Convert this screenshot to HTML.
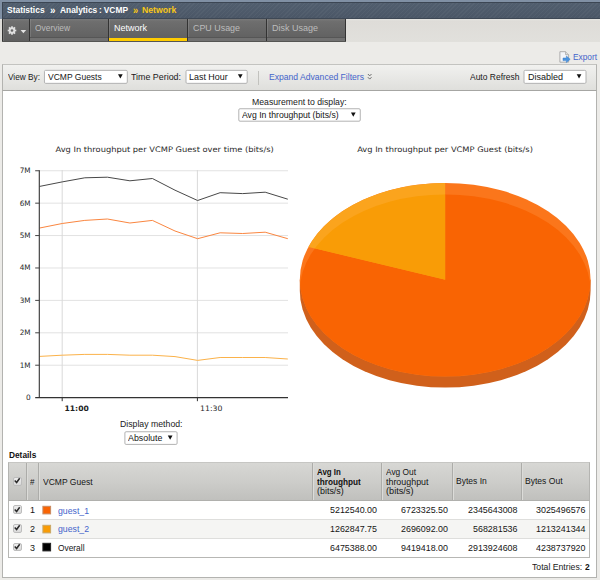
<!DOCTYPE html>
<html><head><meta charset="utf-8"><title>Statistics : Analytics : VCMP : Network</title>
<style>
html,body{margin:0;padding:0;}
body{width:600px;height:580px;overflow:hidden;background:#ecebe8;font-family:"Liberation Sans",Arial,sans-serif;font-size:9px;color:#1a1a1a;position:relative;}
.abs{position:absolute;}
a{text-decoration:none;cursor:pointer;}
.tx{position:absolute;white-space:nowrap;line-height:12px;height:12px;transform-origin:0 0;display:block;}
#hdrl{left:0;top:0;width:600px;height:19px;background:#8090a4;}
#hdr{left:2px;top:2px;width:598px;height:17px;background:repeating-linear-gradient(135deg,rgba(255,255,255,.035) 0,rgba(255,255,255,.035) 1px,rgba(0,0,0,0) 1px,rgba(0,0,0,0) 3px),linear-gradient(#515e6e,#4b5767);border-top:1px solid #3c4653;border-left:1px solid #3c4653;border-bottom:1px solid #3e4855;box-sizing:border-box;}
#tabs{left:2px;top:19px;width:343.8px;height:23px;background:linear-gradient(#333 22px,#555553 22px);box-sizing:border-box;}
.tab{position:absolute;top:0;height:22px;box-sizing:border-box;border-left:1px solid #333;background:linear-gradient(#787878,#6e6e6e 12%,#5f5f5f);}
.tab:before{content:"";position:absolute;left:0;top:0;width:1px;height:100%;background:rgba(255,255,255,.12);}
.tab .ul{position:absolute;left:0;right:0;bottom:0;height:4px;background:#717171;border-top:1px solid #565656;box-sizing:border-box;}
.tab.act .ul{background:#ffcc00;border-top:none;height:3px;}
#fbar{left:2px;top:64px;width:595px;height:27px;box-sizing:border-box;border:1px solid #c3c3c0;border-left-color:#b3b3b0;border-right-color:#b3b3b0;border-bottom:1px solid #a6a6a3;background:linear-gradient(#f1f1ef,#dfdfdc);box-shadow:0 1px 0 #dcdcda;}
.sel{position:absolute;box-sizing:border-box;border:1px solid #b2b2b2;background:#fff;border-radius:1px;}
.sel i{position:absolute;right:3.8px;top:2.8px;width:0;height:0;border-left:2.4px solid transparent;border-right:2.4px solid transparent;border-top:4.4px solid #111;}
#panel{left:2px;top:91px;width:595px;height:487px;box-sizing:border-box;border:1px solid #b3b3b0;border-top:none;background:#fff;}
.cb{position:absolute;width:8.8px;height:8.8px;box-sizing:border-box;border:1px solid #bdbdbd;border-radius:2px;background:linear-gradient(#ededed,#dadada);}
.cb svg{position:absolute;left:-.8px;top:-1.7px;}
</style></head><body>
<div id="hdrl" class="abs"></div>
<div id="hdr" class="abs"></div>
<div class="abs" style="left:0;top:19px;width:600px;height:22.6px;background:linear-gradient(#e6e5e2,#dedcd8 2px,#e1e0dc)"></div>
<div id="tabs" class="abs">
 <div class="tab" style="left:0;width:27px;"></div>
 <div class="tab" style="left:27px;width:79px"><div class="ul"></div></div>
 <div class="tab act" style="left:106px;width:79px"><div class="ul"></div></div>
 <div class="tab" style="left:185px;width:79px"><div class="ul"></div></div>
 <div class="tab" style="left:264px;width:79px"><div class="ul"></div></div>
</div>
<svg class="abs" style="left:0;top:19px" width="40" height="24" viewBox="0 19 40 24">
<g stroke="#e0e0e0" stroke-width="1.7" stroke-linecap="butt"><line x1="14.60" y1="30.50" x2="16.30" y2="30.50"/><line x1="13.84" y1="32.34" x2="15.04" y2="33.54"/><line x1="12.00" y1="33.10" x2="12.00" y2="34.80"/><line x1="10.16" y1="32.34" x2="8.96" y2="33.54"/><line x1="9.40" y1="30.50" x2="7.70" y2="30.50"/><line x1="10.16" y1="28.66" x2="8.96" y2="27.46"/><line x1="12.00" y1="27.90" x2="12.00" y2="26.20"/><line x1="13.84" y1="28.66" x2="15.04" y2="27.46"/></g>
<circle cx="12" cy="30.5" r="2.3" fill="none" stroke="#e0e0e0" stroke-width="1.9"/>
<path d="M20.6 30 L26.2 30 L23.4 33.2 Z" fill="#e4e4e4"/>
</svg>
<svg class="abs" style="left:556px;top:48px" width="18" height="18" viewBox="556 48 18 18">
<path d="M559.9 51.7 L565.6 51.7 L568.6 54.7 L568.6 62.2 L559.9 62.2 Z" fill="#f3f5f9" stroke="#a6a6a6" stroke-width="0.9" stroke-linejoin="round"/>
<path d="M565.6 51.7 L565.6 54.7 L568.6 54.7" fill="#e2e2e2" stroke="#a6a6a6" stroke-width="0.8" stroke-linejoin="round"/>
<path d="M563 58 L566.4 58 L566.4 56 L570.2 59.3 L566.4 62.5 L566.4 60.6 L563 60.6 Z" fill="#4a93de" stroke="#3b7fcb" stroke-width="0.5" stroke-linejoin="round"/>
</svg>
<div id="fbar" class="abs"></div>
<div class="abs" style="left:258px;top:71px;width:1px;height:14px;background:#c2c2be"></div>
<svg class="abs" style="left:365px;top:71px" width="10" height="12" viewBox="365 71 10 12">
<path d="M367.9 74 L369.7 75.9 L371.5 74 M367.9 77.2 L369.7 79.1 L371.5 77.2" fill="none" stroke="#6e6e6e" stroke-width="1"/>
</svg>
<div id="panel" class="abs"></div>
<svg class="abs" style="left:0;top:0" width="600" height="460" viewBox="0 0 600 460">
<rect x="44.45" y="70.35" width="82.85" height="13.00" rx="1.2" fill="#fff" stroke="#b2b2b2" stroke-width="1"/>
<path d="M118.00 74.15 L122.70 74.15 L120.35 78.45 Z" fill="#111"/>
<rect x="186.0" y="70.35" width="61.20" height="13.00" rx="1.2" fill="#fff" stroke="#b2b2b2" stroke-width="1"/>
<path d="M237.90 74.15 L242.60 74.15 L240.25 78.45 Z" fill="#111"/>
<rect x="524.0" y="70.35" width="62.00" height="13.00" rx="1.2" fill="#fff" stroke="#b2b2b2" stroke-width="1"/>
<path d="M576.70 74.15 L581.40 74.15 L579.05 78.45 Z" fill="#111"/>
<rect x="238.8" y="108.75" width="121.45" height="12.45" rx="1.2" fill="#fff" stroke="#b2b2b2" stroke-width="1"/>
<path d="M350.95 112.55 L355.65 112.55 L353.30 116.85 Z" fill="#111"/>
<rect x="124.9" y="431.75" width="52.20" height="12.65" rx="1.2" fill="#fff" stroke="#b2b2b2" stroke-width="1"/>
<path d="M167.80 435.55 L172.50 435.55 L170.15 439.85 Z" fill="#111"/>
</svg>
<svg class="abs" style="left:0;top:130px" width="300" height="290" viewBox="0 130 300 290">
<line x1="39.5" y1="170.75" x2="288" y2="170.75" stroke="#e2e2e2" stroke-width="1"/>
<line x1="39.5" y1="203.16" x2="288" y2="203.16" stroke="#e2e2e2" stroke-width="1"/>
<line x1="39.5" y1="235.57" x2="288" y2="235.57" stroke="#e2e2e2" stroke-width="1"/>
<line x1="39.5" y1="267.98" x2="288" y2="267.98" stroke="#e2e2e2" stroke-width="1"/>
<line x1="39.5" y1="300.39" x2="288" y2="300.39" stroke="#e2e2e2" stroke-width="1"/>
<line x1="39.5" y1="332.8" x2="288" y2="332.8" stroke="#e2e2e2" stroke-width="1"/>
<line x1="39.5" y1="365.21" x2="288" y2="365.21" stroke="#e2e2e2" stroke-width="1"/>
<line x1="62.2" y1="170" x2="62.2" y2="397" stroke="#d9d9d9" stroke-width="1"/>
<line x1="197.4" y1="170" x2="197.4" y2="397" stroke="#d9d9d9" stroke-width="1"/>
<polyline points="39.7,356.4 62.2,355.2 84.8,354.4 107.4,354.4 129.9,355.2 152.4,355.2 175.0,356.6 197.6,360.4 220.1,357.5 242.7,357.5 265.2,357.5 287.8,359.0" fill="none" stroke="#fbb24a" stroke-width="1" stroke-linejoin="round"/>
<polyline points="39.7,228.0 62.2,223.5 84.8,220.4 107.4,219.0 129.9,223.0 152.4,220.4 175.0,231.0 197.6,238.7 220.1,232.8 242.7,233.5 265.2,232.2 287.8,238.7" fill="none" stroke="#fa8640" stroke-width="1" stroke-linejoin="round"/>
<polyline points="39.7,186.4 62.2,181.9 84.8,177.8 107.4,177.2 129.9,180.8 152.4,178.5 175.0,190.2 197.6,200.5 220.1,192.7 242.7,193.6 265.2,192.2 287.8,199.2" fill="none" stroke="#484848" stroke-width="1" stroke-linejoin="round"/>
<line x1="39.3" y1="170.2" x2="39.3" y2="398.1" stroke="#333" stroke-width="1.1"/>
<line x1="35.2" y1="397.6" x2="288" y2="397.6" stroke="#333" stroke-width="1.1"/>
<line x1="35.2" y1="170.75" x2="39.5" y2="170.75" stroke="#444" stroke-width="1"/>
<line x1="35.2" y1="203.16" x2="39.5" y2="203.16" stroke="#444" stroke-width="1"/>
<line x1="35.2" y1="235.57" x2="39.5" y2="235.57" stroke="#444" stroke-width="1"/>
<line x1="35.2" y1="267.98" x2="39.5" y2="267.98" stroke="#444" stroke-width="1"/>
<line x1="35.2" y1="300.39" x2="39.5" y2="300.39" stroke="#444" stroke-width="1"/>
<line x1="35.2" y1="332.8" x2="39.5" y2="332.8" stroke="#444" stroke-width="1"/>
<line x1="35.2" y1="365.21" x2="39.5" y2="365.21" stroke="#444" stroke-width="1"/>
<line x1="62.2" y1="397.3" x2="62.2" y2="401.2" stroke="#333" stroke-width="1"/>
<line x1="197.4" y1="397.3" x2="197.4" y2="401.2" stroke="#333" stroke-width="1"/>
<text x="30.6" y="173.1" text-anchor="end" font-family="'DejaVu Sans',Verdana,sans-serif" font-size="7.4" fill="#2a2a2a" textLength="10.9" lengthAdjust="spacingAndGlyphs">7M</text>
<text x="30.6" y="205.5" text-anchor="end" font-family="'DejaVu Sans',Verdana,sans-serif" font-size="7.4" fill="#2a2a2a" textLength="10.9" lengthAdjust="spacingAndGlyphs">6M</text>
<text x="30.6" y="237.9" text-anchor="end" font-family="'DejaVu Sans',Verdana,sans-serif" font-size="7.4" fill="#2a2a2a" textLength="10.9" lengthAdjust="spacingAndGlyphs">5M</text>
<text x="30.6" y="270.3" text-anchor="end" font-family="'DejaVu Sans',Verdana,sans-serif" font-size="7.4" fill="#2a2a2a" textLength="10.9" lengthAdjust="spacingAndGlyphs">4M</text>
<text x="30.6" y="302.7" text-anchor="end" font-family="'DejaVu Sans',Verdana,sans-serif" font-size="7.4" fill="#2a2a2a" textLength="10.9" lengthAdjust="spacingAndGlyphs">3M</text>
<text x="30.6" y="335.1" text-anchor="end" font-family="'DejaVu Sans',Verdana,sans-serif" font-size="7.4" fill="#2a2a2a" textLength="10.9" lengthAdjust="spacingAndGlyphs">2M</text>
<text x="30.6" y="367.5" text-anchor="end" font-family="'DejaVu Sans',Verdana,sans-serif" font-size="7.4" fill="#2a2a2a" textLength="10.9" lengthAdjust="spacingAndGlyphs">1M</text>
<text x="30.6" y="399.8" text-anchor="end" font-family="'DejaVu Sans',Verdana,sans-serif" font-size="7.4" fill="#2a2a2a">0</text>
<text x="64.5" y="411.2" font-family="'DejaVu Sans',Verdana,sans-serif" font-size="7.4" font-weight="bold" fill="#222" textLength="24.3" lengthAdjust="spacingAndGlyphs">11:00</text>
<text x="200" y="410.8" font-family="'DejaVu Sans',Verdana,sans-serif" font-size="7.4" fill="#2a2a2a" textLength="22.5" lengthAdjust="spacingAndGlyphs">11:30</text>
<text x="55.5" y="151.8" font-family="'DejaVu Sans',Verdana,sans-serif" font-size="7.6" fill="#2a2a2a" textLength="218.3" lengthAdjust="spacingAndGlyphs">Avg In throughput per VCMP Guest over time (bits/s)</text>
</svg>
<svg class="abs" style="left:290px;top:130px" width="310" height="290" viewBox="290 130 310 290">
<defs><clipPath id="cpTop"><ellipse cx="445.2" cy="279.7" rx="145.4" ry="96.8"/></clipPath><clipPath id="cpIn"><ellipse cx="445.2" cy="291.2" rx="145.4" ry="96.8"/></clipPath></defs>
<path d="M299.79999999999995,279.7 L590.6,279.7 L590.6,290.7 A145.4,96.8 0 0 1 299.79999999999995,290.7 Z" fill="#d0601b"/>
<ellipse cx="445.2" cy="279.7" rx="145.4" ry="96.8" fill="#fb761b"/>
<path d="M445.2,279.7 L308.40,246.91 A145.4,96.8 0 0 1 445.2,182.89999999999998 Z" fill="#fba41d"/>
<g clip-path="url(#cpTop)"><g clip-path="url(#cpIn)">
<path d="M445.2,279.7 L445.2,182.89999999999998 A145.4,96.8 0 1 1 308.40,246.91 Z" fill="#f96403"/>
<path d="M445.2,279.7 L308.40,246.91 A145.4,96.8 0 0 1 445.2,182.89999999999998 Z" fill="#f99c06"/>
</g></g>
<text x="357.2" y="151.9" font-family="'DejaVu Sans',Verdana,sans-serif" font-size="7.6" fill="#2a2a2a" textLength="175.7" lengthAdjust="spacingAndGlyphs">Avg In throughput per VCMP Guest (bits/s)</text>
</svg>
<div class="abs" id="tbl" style="left:8.0px;top:462.3px;width:581.6px;height:95.69999999999999px;border:1px solid #b7b7b4;box-sizing:border-box;background:#fff;"></div>
<div class="abs" style="left:9.0px;top:520.0px;width:579.6px;height:17.600000000000023px;background:#f5f5f3"></div>
<div class="abs" style="left:9.0px;top:519.0px;width:579.6px;height:1px;background:#dededc"></div>
<div class="abs" style="left:9.0px;top:537.6px;width:579.6px;height:1px;background:#dededc"></div>
<div class="abs" style="left:8.0px;top:462.3px;width:581.6px;height:38.5px;background:linear-gradient(#d7d7d4,#cdcdca 50%,#c0c0bd);border:1px solid #b4b4b1;border-top-color:#c6c6c3;border-bottom-color:#b0b0ad;box-sizing:border-box;"></div>
<div class="abs" style="left:25.5px;top:463.3px;width:1px;height:36.5px;background:#acaca9"></div>
<div class="abs" style="left:26.5px;top:463.3px;width:1px;height:36.5px;background:#dcdcd9"></div>
<div class="abs" style="left:38.1px;top:463.3px;width:1px;height:36.5px;background:#acaca9"></div>
<div class="abs" style="left:39.1px;top:463.3px;width:1px;height:36.5px;background:#dcdcd9"></div>
<div class="abs" style="left:311.9px;top:463.3px;width:1px;height:36.5px;background:#acaca9"></div>
<div class="abs" style="left:312.9px;top:463.3px;width:1px;height:36.5px;background:#dcdcd9"></div>
<div class="abs" style="left:380.7px;top:463.3px;width:1px;height:36.5px;background:#acaca9"></div>
<div class="abs" style="left:381.7px;top:463.3px;width:1px;height:36.5px;background:#dcdcd9"></div>
<div class="abs" style="left:451.5px;top:463.3px;width:1px;height:36.5px;background:#acaca9"></div>
<div class="abs" style="left:452.5px;top:463.3px;width:1px;height:36.5px;background:#dcdcd9"></div>
<div class="abs" style="left:520.7px;top:463.3px;width:1px;height:36.5px;background:#acaca9"></div>
<div class="abs" style="left:521.7px;top:463.3px;width:1px;height:36.5px;background:#dcdcd9"></div>
<div class="cb" style="left:13.1px;top:476.9px"><svg width="8.4" height="8.4" viewBox="0 0 8.4 8.4"><path d="M1.7 4.6 L3.6 6.5 L6.7 2.2" fill="none" stroke="#2a2a2a" stroke-width="1.5"/></svg></div>
<div class="cb" style="left:13.1px;top:505.3px"><svg width="8.4" height="8.4" viewBox="0 0 8.4 8.4"><path d="M1.7 4.6 L3.6 6.5 L6.7 2.2" fill="none" stroke="#2a2a2a" stroke-width="1.5"/></svg></div>
<div class="cb" style="left:13.1px;top:523.9px"><svg width="8.4" height="8.4" viewBox="0 0 8.4 8.4"><path d="M1.7 4.6 L3.6 6.5 L6.7 2.2" fill="none" stroke="#2a2a2a" stroke-width="1.5"/></svg></div>
<div class="cb" style="left:13.1px;top:542.5px"><svg width="8.4" height="8.4" viewBox="0 0 8.4 8.4"><path d="M1.7 4.6 L3.6 6.5 L6.7 2.2" fill="none" stroke="#2a2a2a" stroke-width="1.5"/></svg></div>
<svg class="abs" style="left:40px;top:503.8px" width="14" height="13" viewBox="0 0 14 13"><rect x="2.9" y="2.3" width="7.7" height="7.6" fill="#f96403" stroke="#c98a62" stroke-width="1"/></svg>
<svg class="abs" style="left:40px;top:522.9px" width="14" height="13" viewBox="0 0 14 13"><rect x="2.9" y="2.3" width="7.7" height="7.6" fill="#f99c06" stroke="#c9a868" stroke-width="1"/></svg>
<svg class="abs" style="left:40px;top:541.3px" width="14" height="13" viewBox="0 0 14 13"><rect x="2.9" y="2.3" width="7.7" height="7.6" fill="#000" stroke="#222" stroke-width="1"/></svg>
<span class="tx" id="t0" style="left:7.10px;top:4.38px;font-size:9px;font-weight:bold;color:#fff;transform:scaleX(0.9405)">Statistics</span>
<span class="tx" id="t1" style="left:49.75px;top:4.09px;font-size:11px;font-weight:bold;color:#fff;transform:scaleX(0.8898)">»</span>
<span class="tx" id="t2" style="left:59.50px;top:4.38px;font-size:9px;font-weight:bold;color:#fff;word-spacing:-0.5px;transform:scaleX(0.9311)">Analytics : VCMP</span>
<span class="tx" id="t3" style="left:132.50px;top:4.09px;font-size:11px;font-weight:bold;color:#f8c616;transform:scaleX(0.8490)">»</span>
<span class="tx" id="t4" style="left:142.00px;top:4.38px;font-size:9px;font-weight:bold;color:#f8c616;transform:scaleX(0.9644)">Network</span>
<span class="tx" id="t5" style="left:35.25px;top:22.13px;font-size:9px;color:#bcbcbc;transform:scaleX(0.9329)">Overview</span>
<span class="tx" id="t6" style="left:113.75px;top:22.13px;font-size:9px;color:#fff;transform:scaleX(0.9995)">Network</span>
<span class="tx" id="t7" style="left:193.00px;top:22.13px;font-size:9px;color:#bcbcbc;transform:scaleX(0.9888)">CPU Usage</span>
<span class="tx" id="t8" style="left:272.00px;top:22.13px;font-size:9px;color:#bcbcbc;transform:scaleX(0.9997)">Disk Usage</span>
<a class="tx" id="t9" style="left:572.70px;top:50.78px;font-size:9px;color:#4464cb;transform:scaleX(0.9225)">Export</a>
<span class="tx" id="t10" style="left:8.00px;top:70.63px;font-size:9px;color:#1a1a1a;transform:scaleX(0.9180)">View By:</span>
<span class="tx" id="t11" style="left:47.50px;top:70.63px;font-size:9px;color:#151515;transform:scaleX(0.9453)">VCMP Guests</span>
<span class="tx" id="t12" style="left:131.25px;top:70.63px;font-size:9px;color:#1a1a1a;transform:scaleX(0.9864)">Time Period:</span>
<span class="tx" id="t13" style="left:188.75px;top:70.63px;font-size:9px;color:#151515;transform:scaleX(0.9928)">Last Hour</span>
<a class="tx" id="t14" style="left:269.00px;top:70.63px;font-size:9px;color:#4464cb;transform:scaleX(0.9542)">Expand Advanced Filters</a>
<span class="tx" id="t15" style="left:469.50px;top:70.63px;font-size:9px;color:#1a1a1a;transform:scaleX(0.9423)">Auto Refresh</span>
<span class="tx" id="t16" style="left:527.50px;top:70.63px;font-size:9px;color:#151515;transform:scaleX(0.9991)">Disabled</span>
<span class="tx" id="t17" style="left:252.30px;top:95.88px;font-size:9px;color:#1a1a1a;transform:scaleX(0.9659)">Measurement to display:</span>
<span class="tx" id="t18" style="left:241.70px;top:109.48px;font-size:9px;color:#151515;transform:scaleX(0.9622)">Avg In throughput (bits/s)</span>
<span class="tx" id="t19" style="left:119.50px;top:418.38px;font-size:9px;color:#1a1a1a;transform:scaleX(0.9685)">Display method:</span>
<span class="tx" id="t20" style="left:127.50px;top:431.58px;font-size:9px;color:#151515;transform:scaleX(0.9820)">Absolute</span>
<span class="tx" id="t21" style="left:9.00px;top:449.48px;font-size:9px;font-weight:bold;color:#111;transform:scaleX(0.9232)">Details</span>
<span class="tx" id="t22" style="left:30.25px;top:475.88px;font-size:9px;color:#151515;transform:scaleX(0.8972)">#</span>
<span class="tx" id="t23" style="left:43.00px;top:475.88px;font-size:9px;color:#151515;transform:scaleX(0.9454)">VCMP Guest</span>
<span class="tx" id="t24" style="left:316.75px;top:465.88px;font-size:9px;font-weight:bold;color:#111;transform:scaleX(0.8741)">Avg In</span>
<span class="tx" id="t25" style="left:316.75px;top:475.58px;font-size:9px;font-weight:bold;color:#111;transform:scaleX(0.9118)">throughput</span>
<span class="tx" id="t26" style="left:316.75px;top:485.28px;font-size:9px;color:#151515;transform:scaleX(0.9907)">(bits/s)</span>
<span class="tx" id="t27" style="left:385.50px;top:465.88px;font-size:9px;color:#151515;transform:scaleX(0.9271)">Avg Out</span>
<span class="tx" id="t28" style="left:385.50px;top:475.58px;font-size:9px;color:#151515;transform:scaleX(0.9873)">throughput</span>
<span class="tx" id="t29" style="left:385.50px;top:485.28px;font-size:9px;color:#151515;transform:scaleX(1.0185)">(bits/s)</span>
<span class="tx" id="t30" style="left:455.50px;top:475.48px;font-size:9px;color:#151515;transform:scaleX(0.9457)">Bytes In</span>
<span class="tx" id="t31" style="left:525.00px;top:475.48px;font-size:9px;color:#151515;transform:scaleX(0.9490)">Bytes Out</span>
<span class="tx" id="t32" style="left:30.00px;top:504.48px;font-size:9px;color:#151515;transform:scaleX(0.9969)">1</span>
<a class="tx" id="t33" style="left:57.75px;top:504.78px;font-size:9px;color:#4464cb;transform:scaleX(0.9678)">guest_1</a>
<span class="tx" id="t34" style="left:330.40px;top:504.48px;font-size:9px;color:#151515;transform:scaleX(0.9882)">5212540.00</span>
<span class="tx" id="t35" style="left:400.70px;top:504.48px;font-size:9px;color:#151515;transform:scaleX(0.9882)">6723325.50</span>
<span class="tx" id="t36" style="left:467.50px;top:504.48px;font-size:9px;color:#151515;transform:scaleX(0.9888)">2345643008</span>
<span class="tx" id="t37" style="left:536.30px;top:504.48px;font-size:9px;color:#151515;transform:scaleX(0.9888)">3025496576</span>
<span class="tx" id="t38" style="left:30.00px;top:522.98px;font-size:9px;color:#151515;transform:scaleX(0.9969)">2</span>
<a class="tx" id="t39" style="left:57.75px;top:523.28px;font-size:9px;color:#4464cb;transform:scaleX(0.9678)">guest_2</a>
<span class="tx" id="t40" style="left:330.40px;top:522.98px;font-size:9px;color:#151515;transform:scaleX(0.9882)">1262847.75</span>
<span class="tx" id="t41" style="left:400.70px;top:522.98px;font-size:9px;color:#151515;transform:scaleX(0.9882)">2696092.00</span>
<span class="tx" id="t42" style="left:472.50px;top:522.98px;font-size:9px;color:#151515;transform:scaleX(0.9875)">568281536</span>
<span class="tx" id="t43" style="left:536.30px;top:522.98px;font-size:9px;color:#151515;transform:scaleX(0.9888)">1213241344</span>
<span class="tx" id="t44" style="left:30.00px;top:541.58px;font-size:9px;color:#151515;transform:scaleX(0.9969)">3</span>
<span class="tx" id="t45" style="left:57.75px;top:541.88px;font-size:9px;color:#151515;transform:scaleX(0.9293)">Overall</span>
<span class="tx" id="t46" style="left:330.40px;top:541.58px;font-size:9px;color:#151515;transform:scaleX(0.9882)">6475388.00</span>
<span class="tx" id="t47" style="left:400.70px;top:541.58px;font-size:9px;color:#151515;transform:scaleX(0.9882)">9419418.00</span>
<span class="tx" id="t48" style="left:467.50px;top:541.58px;font-size:9px;color:#151515;transform:scaleX(0.9888)">2913924608</span>
<span class="tx" id="t49" style="left:536.30px;top:541.58px;font-size:9px;color:#151515;transform:scaleX(0.9888)">4238737920</span>
<span class="tx" id="t50" style="left:532.00px;top:560.78px;font-size:9px;color:#1a1a1a;transform:scaleX(0.9648)">Total Entries:</span>
<span class="tx" id="t51" style="left:585.40px;top:560.78px;font-size:9px;font-weight:bold;color:#111;transform:scaleX(0.9371)">2</span>

</body></html>
